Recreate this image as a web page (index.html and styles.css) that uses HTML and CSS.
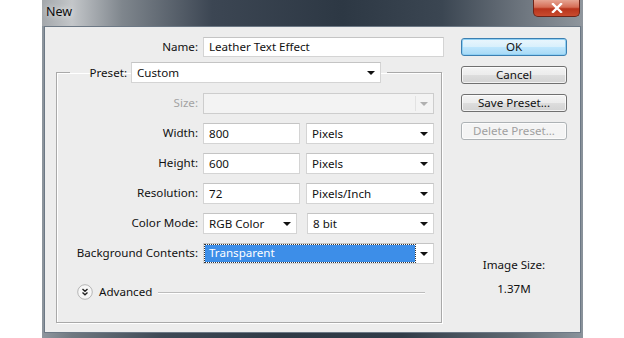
FILE: index.html
```html
<!DOCTYPE html>
<html>
<head>
<meta charset="utf-8">
<link rel="stylesheet" href="styles.css">
</head>
<body>
<div class="window">
  <div class="titlebar">
    <span class="title">New</span>
    <div class="close">
      <svg width="12" height="10" viewBox="0 0 12 10"><path d="M2 1 L10 9 M10 1 L2 9" stroke="#fff" stroke-width="2.4" stroke-linecap="square"/></svg>
    </div>
  </div>
  <div class="body">
    <div class="left">
      <div class="name-row">
        <span class="lbl name-lbl">Name:</span>
        <div class="field name-field">Leather Text Effect</div>
      </div>
      <fieldset class="group">
        <legend class="legend">
          <span class="lbl">Preset:</span>
          <div class="field select preset">Custom<i class="arr"></i></div>
        </legend>
        <div class="rows">
          <span class="lbl disabled">Size:</span>
          <div class="ctrl"><div class="field select size-select"><span class="sep"></span><i class="arr gray"></i></div></div>

          <span class="lbl">Width:</span>
          <div class="ctrl"><div class="field num">800</div><div class="field select unit">Pixels<i class="arr"></i></div></div>

          <span class="lbl">Height:</span>
          <div class="ctrl"><div class="field num">600</div><div class="field select unit">Pixels<i class="arr"></i></div></div>

          <span class="lbl">Resolution:</span>
          <div class="ctrl"><div class="field num">72</div><div class="field select unit">Pixels/Inch<i class="arr"></i></div></div>

          <span class="lbl">Color Mode:</span>
          <div class="ctrl"><div class="field select mode">RGB Color<i class="arr"></i></div><div class="field select bits">8 bit<i class="arr"></i></div></div>

          <span class="lbl">Background Contents:</span>
          <div class="ctrl"><div class="field select bg"><span class="hl">Transparent</span><i class="arr"></i></div></div>
        </div>
        <div class="advanced">
          <span class="adv-icon">
            <svg width="16" height="16" viewBox="0 0 16 16"><circle cx="8" cy="8" r="7.3" fill="#f7f7f7" stroke="#b5b5b5"/><path d="M5.5 5 L8 7.2 L10.5 5 M5.5 8.5 L8 10.7 L10.5 8.5" fill="none" stroke="#222" stroke-width="1.4"/></svg>
          </span>
          <span class="adv-text">Advanced</span>
          <span class="adv-line"></span>
        </div>
      </fieldset>
    </div>
    <div class="right">
      <div class="btn default">OK</div>
      <div class="btn">Cancel</div>
      <div class="btn">Save Preset...</div>
      <div class="btn off">Delete Preset...</div>
      <div class="info">
        <div>Image Size:</div>
        <div>1.37M</div>
      </div>
    </div>
  </div>
</div>
</body>
</html>
```
FILE: styles.css
```css
* { box-sizing: border-box; }
html, body { margin: 0; padding: 0; background: #fff; }
body {
  font-family: "Noto Sans", "Open Sans", sans-serif;
  font-size: 11.6px;
  color: #111;
}
.window {
  margin-left: 42px;
  width: 541px;
  height: 338px;
  display: flex;
  flex-direction: column;
  background: linear-gradient(90deg, #8e969e 0, #6f7880 30px, #3e4955 120px, #2f3a46 240px, #313c48 360px, #5d6770 470px, #8a939b 541px);
  padding: 0 2px 5px 2px;
}
.titlebar {
  height: 26px;
  display: flex;
  align-items: flex-start;
  margin: 0 -2px;
  padding: 0 3px 0 4px;
  background: linear-gradient(90deg, #a3a7ab 0, #c3c6c9 30px, #7f868d 80px, #3c4653 170px, #2d3844 300px, #3b4652 400px, #6d757e 480px, #8f969d 541px);
}
.title {
  font-size: 12.5px;
  line-height: 24px;
  color: #0c0c0c;
  text-shadow: 0 0 6px rgba(255,255,255,0.9);
}
.close {
  margin-left: auto;
  width: 47px;
  height: 17px;
  border: 1px solid #6e2418;
  border-top: none;
  border-radius: 0 0 5px 5px;
  background: linear-gradient(180deg, #e6a593 0, #d56d55 45%, #b8341c 55%, #c94b2f 100%);
  display: flex;
  align-items: center;
  justify-content: center;
}
.body {
  flex: 1;
  display: flex;
  background: #ededed;
  border: 1px solid #6c7885;
}
.left { width: 416px; }
.lbl { text-align: right; white-space: nowrap; line-height: 20px; }
.disabled { color: #a3a3a3; }
.field {
  background: #fff;
  border: 1px solid #d4d4d4;
  border-top-color: #c4c4c4;
  height: 20px;
  line-height: 18px;
  padding: 0 5px;
  white-space: nowrap;
  position: relative;
}
.name-row {
  display: flex;
  margin-top: 10px;
  height: 20px;
}
.name-lbl { width: 153px; }
.name-field { margin-left: 5px; width: 241px; }
.group {
  margin: 5px 0 0 11px;
  width: 386px;
  padding: 10px 7px 22px 0;
  border: 1px solid #a9a9a9;
  box-shadow: inset 1px 1px 0 #fff, 1px 1px 0 #fff;
}
.legend {
  margin-left: 13px;
  padding: 0 6px 0 0;
  display: flex;
  align-items: center;
  height: 21px;
}
.legend .lbl { width: 57px; }
.preset { margin-left: 4px; width: 250px; height: 21px; line-height: 19px; }
.arr {
  position: absolute;
  right: 5px;
  top: 8px;
  width: 0;
  height: 0;
  border-left: 4px solid transparent;
  border-right: 4px solid transparent;
  border-top: 4px solid #111;
}
.arr.gray { border-top-color: #b0b0b0; }
.rows {
  display: grid;
  grid-template-columns: 141px 231px;
  column-gap: 5px;
  row-gap: 9px;
  grid-auto-rows: 21px;
}
.ctrl { display: flex; justify-content: space-between; }
.ctrl .field { height: 21px; line-height: 19px; }
.size-select { width: 231px; background: #f3f3f3; border-color: #cdcdcd; }
.sep { position: absolute; right: 17px; top: 2px; bottom: 2px; border-left: 1px solid #e2e2e2; }
.num { width: 97px; }
.unit { width: 128px; }
.mode { width: 94px; }
.bits { width: 127px; }
.bg { width: 231px; padding: 1px; }
.hl {
  display: block;
  width: 210px;
  height: 17px;
  line-height: 16px;
  padding-left: 4px;
  background: #3d8ee8;
  color: #fff;
  outline: 1px dotted #333;
}
.advanced {
  display: flex;
  align-items: center;
  margin-top: 20px;
  height: 16px;
  padding-left: 20px;
}
.adv-icon { display: flex; width: 16px; height: 16px; }
.adv-text { margin-left: 6px; line-height: 16px; }
.adv-line { flex: 1; margin: 0 9px 0 6px; border-top: 1px solid #bcbcbc; box-shadow: 0 1px 0 #fff; }
.right {
  display: flex;
  flex-direction: column;
  width: 106px;
  margin-left: 0;
  padding-top: 11px;
}
.btn {
  height: 18px;
  margin-bottom: 10px;
  border: 1px solid #707070;
  border-radius: 3px;
  background: linear-gradient(180deg, #f4f4f4 0, #ececec 48%, #dddddd 52%, #d3d3d3 100%);
  box-shadow: inset 0 0 0 1px rgba(255,255,255,0.7);
  text-align: center;
  line-height: 16px;
  color: #111;
}
.btn.default {
  border-color: #3c7fb1;
  background: linear-gradient(180deg, #eaf6fd 0, #d9f0fc 48%, #bee6fd 52%, #a7d9f5 100%);
  box-shadow: inset 0 0 0 1px #8fd0f4;
}
.btn.off {
  color: #a0a0a0;
  border-color: #adb2b5;
  background: #f4f4f4;
}
.info {
  margin-top: 107px;
  text-align: center;
  line-height: 16px;
  display: flex;
  flex-direction: column;
  gap: 8px;
}
```
